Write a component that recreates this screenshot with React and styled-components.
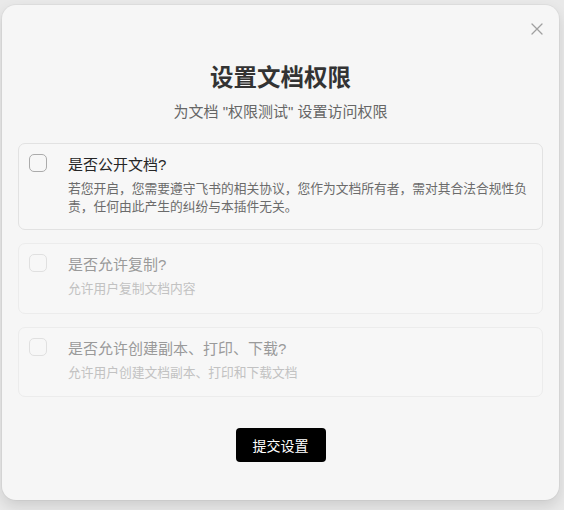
import React, { useState } from 'react';
import styled, { createGlobalStyle } from 'styled-components';

const GlobalStyles = createGlobalStyle`
  html, body {
    margin: 0;
    padding: 0;
    background: #e9e9e9;
    font-family: "Liberation Sans", "Noto Sans CJK SC", sans-serif;
  }
`;

const Page = styled.div`
  width: 564px;
  height: 510px;
  overflow: hidden;
`;

const Modal = styled.div`
  position: relative;
  box-sizing: border-box;
  width: 557px;
  margin: 5px 0 0 2px;
  padding: 57px 16px 38px;
  background: #f6f6f6;
  border-radius: 14px;
  box-shadow: 0 6px 14px rgba(0, 0, 0, 0.12), 0 0 0 1px rgba(0, 0, 0, 0.03);
  display: flex;
  flex-direction: column;
  align-items: stretch;
`;

const Close = styled.button`
  position: absolute;
  top: 18px;
  right: 16px;
  width: 12px;
  height: 12px;
  padding: 0;
  border: 0;
  background: none;
  color: #a0a0a0;
  cursor: pointer;
  display: flex;
`;

const Title = styled.h2`
  margin: 0;
  font-size: 23.5px;
  line-height: 32px;
  font-weight: 700;
  color: #333;
  text-align: center;
`;

const Subtitle = styled.p`
  margin: 7px 0 0;
  font-size: 15px;
  line-height: 22px;
  color: #666;
  text-align: center;
`;

const Options = styled.div`
  margin-top: 20px;
  display: flex;
  flex-direction: column;
  gap: 13px;
`;

const Card = styled.label`
  display: flex;
  gap: 21px;
  padding: 10px 12px ${({ $tall }) => ($tall ? '14px' : '15px')} 10px;
  border: 1px solid ${({ $disabled }) => ($disabled ? '#ececec' : '#e2e2e2')};
  border-radius: 7px;
  background: #f7f7f7;
  cursor: ${({ $disabled }) => ($disabled ? 'default' : 'pointer')};
`;

const Box = styled.span`
  flex: none;
  box-sizing: border-box;
  width: 18px;
  height: 18px;
  border: 1.5px solid ${({ $disabled }) => ($disabled ? '#e0e0e0' : '#ababab')};
  border-radius: 5px;
  background: ${({ $checked }) => ($checked ? '#000' : 'transparent')};
  display: flex;
  align-items: center;
  justify-content: center;
  color: #fff;
`;

const Body = styled.div`
  display: flex;
  flex-direction: column;
  gap: 4px;
  min-width: 0;
`;

const OptionTitle = styled.div`
  font-size: 15px;
  line-height: 22px;
  color: ${({ $disabled }) => ($disabled ? '#9a9a9a' : '#262626')};
`;

const OptionDesc = styled.div`
  font-size: 12.75px;
  line-height: 17.5px;
  color: ${({ $disabled }) => ($disabled ? '#c2c2c2' : '#6b6b6b')};
`;

const Footer = styled.div`
  margin-top: 31px;
  display: flex;
  justify-content: center;
`;

const Submit = styled.button`
  width: 90px;
  height: 34px;
  border: 0;
  border-radius: 4px;
  background: #000;
  color: #fff;
  font-family: inherit;
  font-size: 14px;
  cursor: pointer;
`;

const options = [
  {
    key: 'public',
    title: '是否公开文档?',
    desc: '若您开启，您需要遵守飞书的相关协议，您作为文档所有者，需对其合法合规性负责，任何由此产生的纠纷与本插件无关。',
  },
  { key: 'copy', title: '是否允许复制?', desc: '允许用户复制文档内容', disabled: true },
  {
    key: 'export',
    title: '是否允许创建副本、打印、下载?',
    desc: '允许用户创建文档副本、打印和下载文档',
    disabled: true,
  },
];

export default function App() {
  const [checked, setChecked] = useState({});

  const toggle = (opt) => {
    if (opt.disabled) return;
    setChecked((c) => ({ ...c, [opt.key]: !c[opt.key] }));
  };

  return (
    <Page>
      <GlobalStyles />
      <Modal>
        <Close aria-label="关闭">
          <svg width="12" height="12" viewBox="0 0 12 12" fill="none" stroke="currentColor" strokeWidth="1.3" strokeLinecap="round">
            <path d="M1 1l10 10M11 1L1 11" />
          </svg>
        </Close>
        <Title>设置文档权限</Title>
        <Subtitle>为文档 "权限测试" 设置访问权限</Subtitle>
        <Options>
          {options.map((opt, i) => (
            <Card key={opt.key} $disabled={opt.disabled} $tall={i === 0} onClick={() => toggle(opt)}>
              <Box $disabled={opt.disabled} $checked={checked[opt.key]}>
                {checked[opt.key] && (
                  <svg width="11" height="11" viewBox="0 0 12 12" fill="none" stroke="currentColor" strokeWidth="2">
                    <path d="M2 6.5l2.5 2.5L10 3.5" />
                  </svg>
                )}
              </Box>
              <Body>
                <OptionTitle $disabled={opt.disabled}>{opt.title}</OptionTitle>
                <OptionDesc $disabled={opt.disabled}>{opt.desc}</OptionDesc>
              </Body>
            </Card>
          ))}
        </Options>
        <Footer>
          <Submit>提交设置</Submit>
        </Footer>
      </Modal>
    </Page>
  );
}
